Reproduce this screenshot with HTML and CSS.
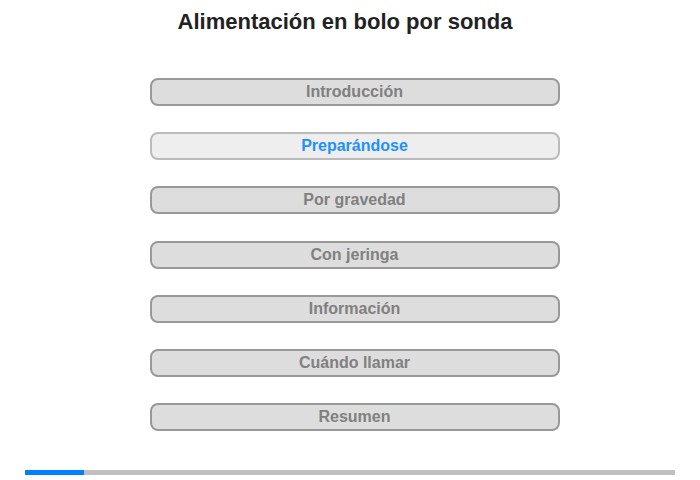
FILE: index.html
```html
<!DOCTYPE html>
<html>
<head>
    <meta charset="utf-8">
    <link rel="stylesheet" href="styles.css">
</head>
<body>
    <div class="page">
        <h1 class="title">Alimentación en bolo por sonda</h1>
        <div class="menu">
            <div class="item">Introducción</div>
            <div class="item active">Preparándose</div>
            <div class="item">Por gravedad</div>
            <div class="item">Con jeringa</div>
            <div class="item">Información</div>
            <div class="item">Cuándo llamar</div>
            <div class="item">Resumen</div>
        </div>
        <div class="progress">
            <div class="progress-fill" style="width: 9%"></div>
        </div>
    </div>
</body>
</html>
```

FILE: styles.css
```css
html, body {
    margin: 0;
    padding: 0;
    background: #fff;
}
.page {
    width: 700px;
    height: 480px;
    font-family: "Liberation Sans", Arial, sans-serif;
    display: flex;
    flex-direction: column;
    align-items: center;
}
.title {
    margin: 9px 10px 0 0;
    font-size: 22px;
    line-height: 26px;
    font-weight: bold;
    color: #222;
}
.menu {
    margin: 43px 0 0 9px;
    display: flex;
    flex-direction: column;
    gap: 26.2px;
}
.item {
    box-sizing: border-box;
    width: 410px;
    height: 28px;
    border: 2px solid #999;
    border-radius: 8px;
    background: #ddd;
    color: #808080;
    font-size: 16px;
    font-weight: bold;
    line-height: 24px;
    text-align: center;
    cursor: pointer;
}
.item.active {
    background: #eee;
    border-color: #bbb;
    color: #1e90ff;
}
.progress {
    margin-top: 39px;
    width: 650px;
    height: 5px;
    background: #c0c0c0;
}
.progress-fill {
    height: 100%;
    background: #0080ff;
}
```
